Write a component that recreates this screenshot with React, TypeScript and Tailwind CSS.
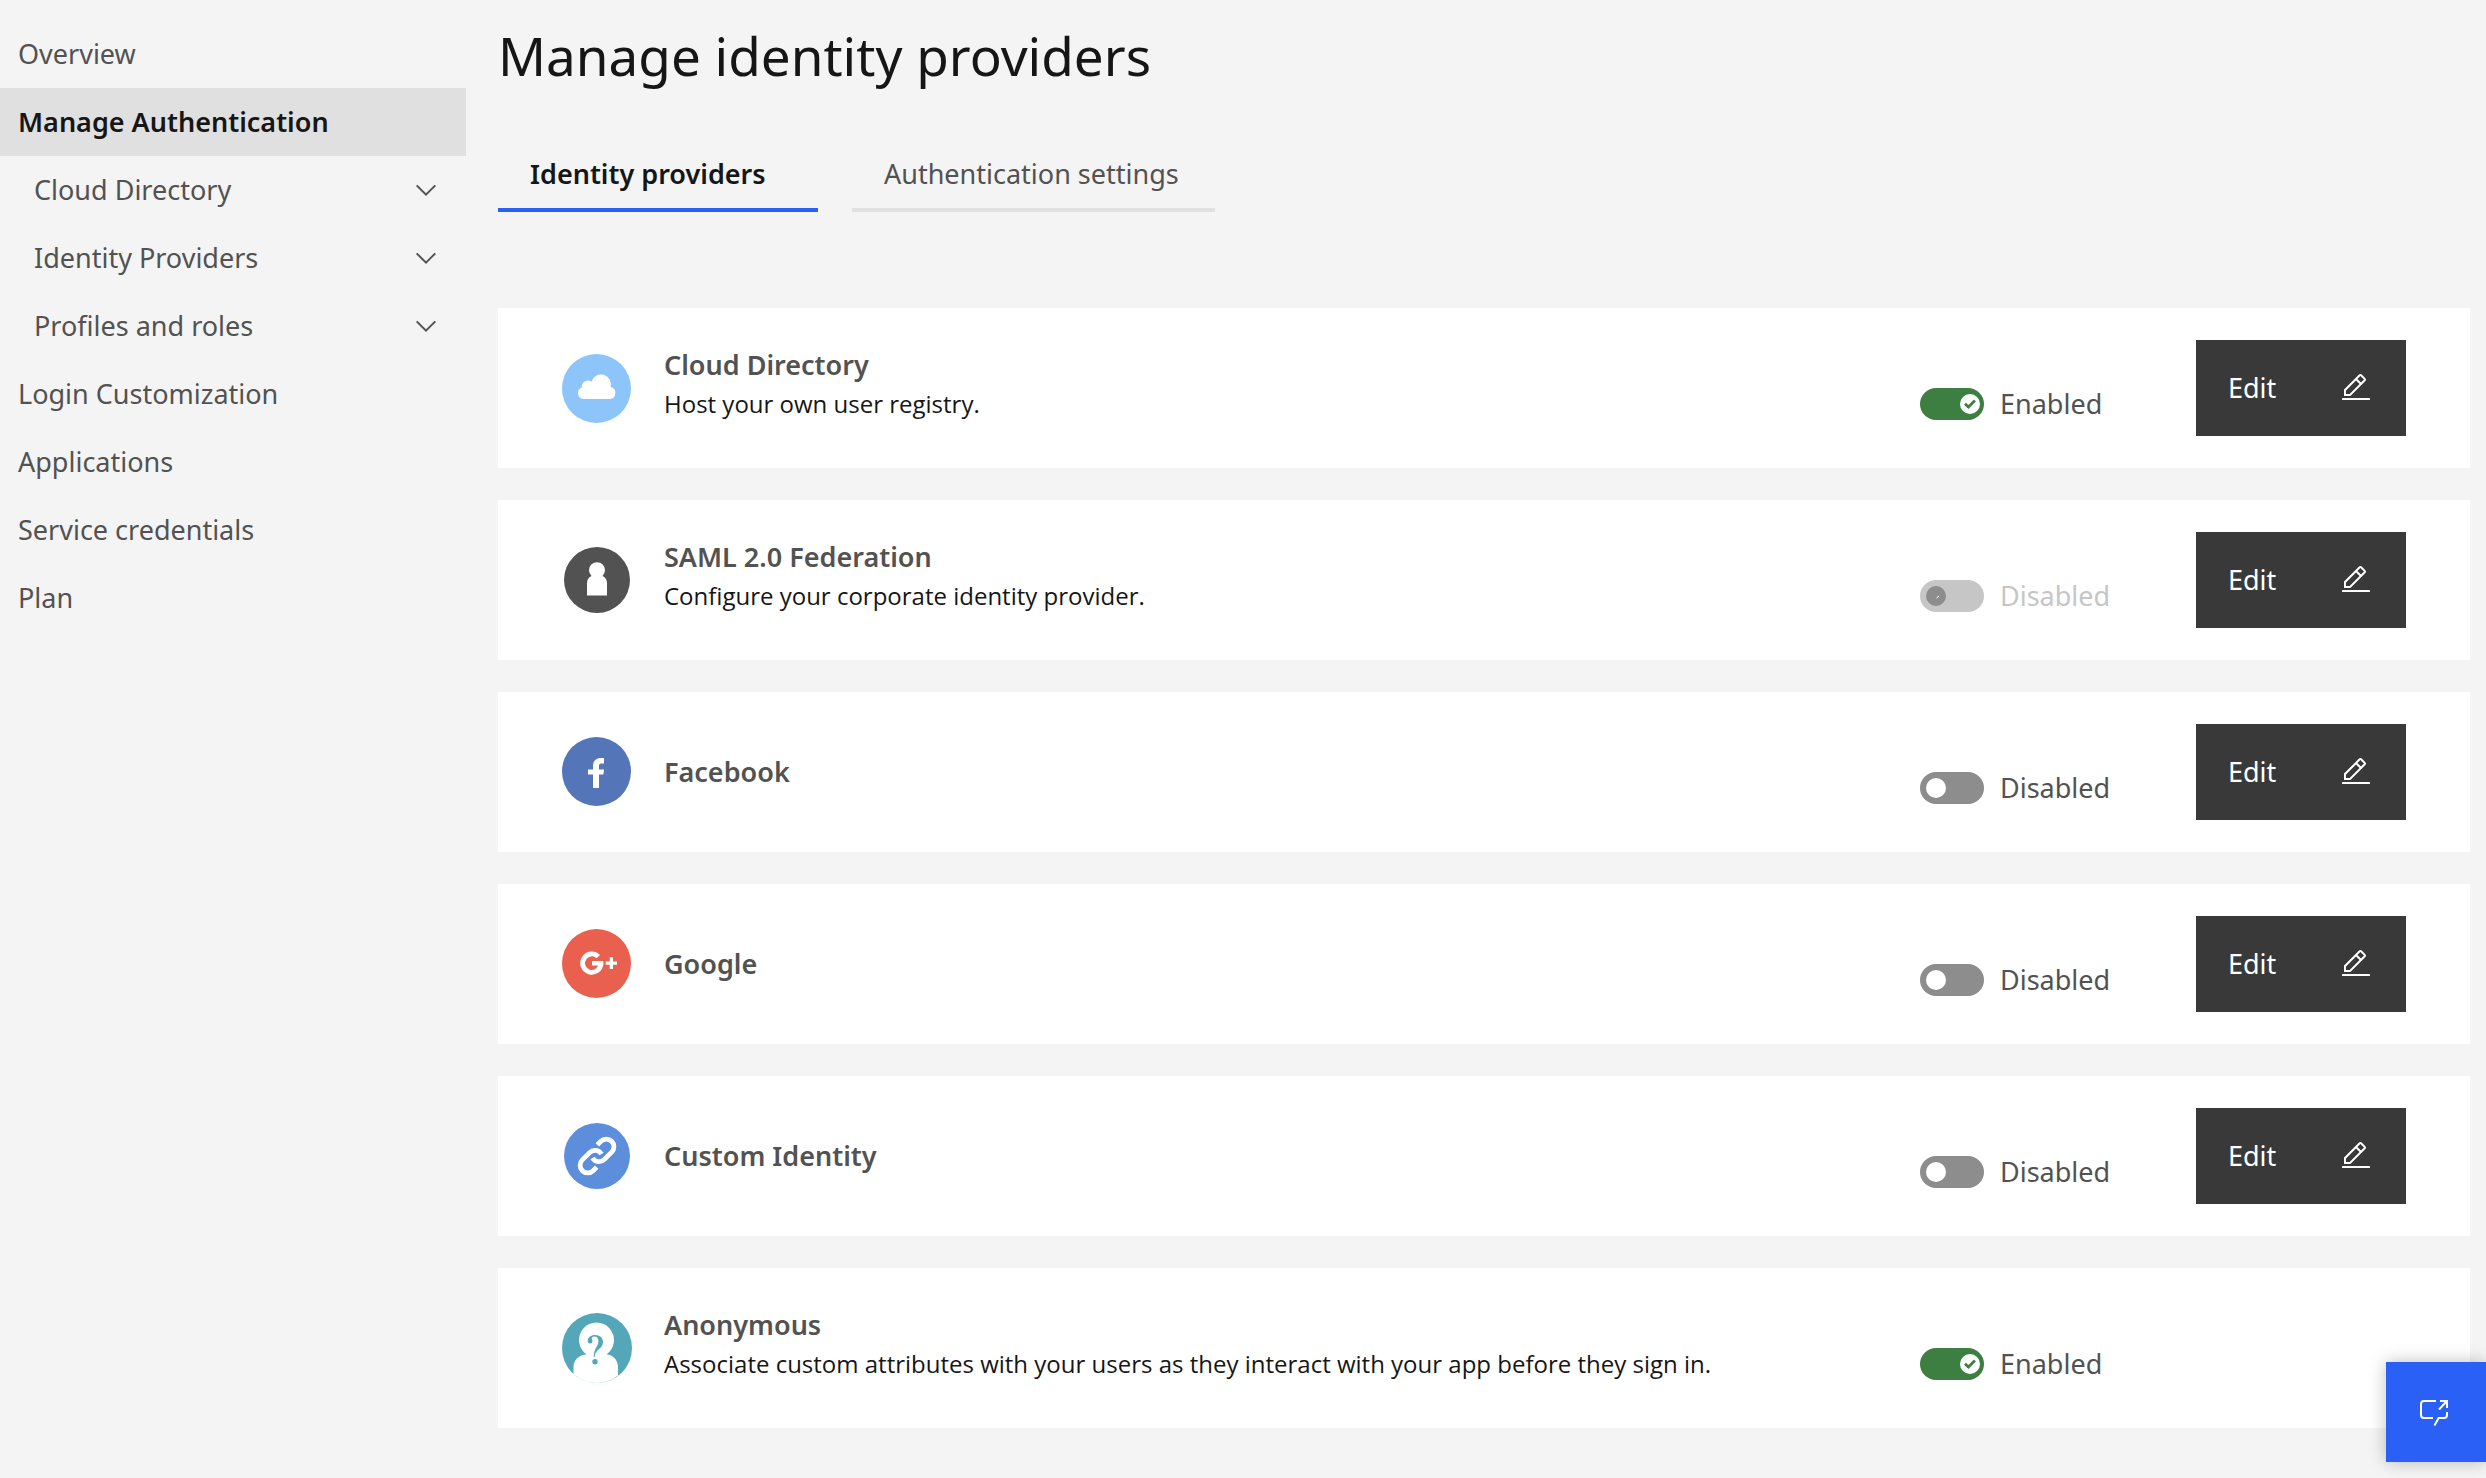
import type { ReactNode } from 'react';

const navItems = [
  { label: 'Overview' },
  { label: 'Manage Authentication', active: true },
  { label: 'Cloud Directory', nested: true },
  { label: 'Identity Providers', nested: true },
  { label: 'Profiles and roles', nested: true },
  { label: 'Login Customization' },
  { label: 'Applications' },
  { label: 'Service credentials' },
  { label: 'Plan' },
];

const ChevronDown = () => (
  <svg viewBox="0 0 32 32" className="size-8" fill="none" stroke="#525252" strokeWidth="2" aria-hidden="true">
    <path d="M6.7 11.4 16 20.7l9.3-9.3" />
  </svg>
);

const EditIcon = () => (
  <svg viewBox="0 0 32 32" className="size-8" fill="currentColor" aria-hidden="true">
    <path d="M2 26h28v2H2zM25.4 9c.8-.8.8-2 0-2.8l-3.6-3.6c-.8-.8-2-.8-2.8 0l-15 15V24h6.4l15-15zm-5-5L24 7.6l-3 3L17.4 7l3-3zM6 22v-3.6l10-10 3.6 3.6-10 10H6z" />
  </svg>
);

const ChatLaunchIcon = () => (
  <svg viewBox="0 0 32 32" className="size-8" fill="none" stroke="currentColor" strokeWidth="2" aria-hidden="true">
    <path d="M18 5H6a3 3 0 0 0-3 3v11a3 3 0 0 0 3 3h9" />
    <path d="M16.500 29.500 20.600 22H26a3 3 0 0 0 3-3v-3" />
    <path d="M22 5h7v7M29 5l-8 8.500" />
  </svg>
);

const CloudLogo = () => (
  <svg viewBox="0 0 70 70" className="size-[70px]" aria-hidden="true">
    <circle cx="34.500" cy="35.500" r="34.500" fill="#8dc5fb" />
    <path
      fill="#fff"
      d="M21 46a6 6 0 0 1-1.200-11.500A6.200 6.200 0 0 1 29.500 28.800 9.700 9.700 0 0 1 48.600 34 6.100 6.100 0 0 1 48 46z"
    />
  </svg>
);

const SamlLogo = () => (
  <svg viewBox="0 0 70 70" className="size-[70px]" aria-hidden="true">
    <circle cx="35" cy="35" r="33" fill="#525252" />
    <path fill="#fff" d="M25 50.500V38.500a8 8 0 0 1 4.500-7.500 8 8 0 1 1 11 0A8 8 0 0 1 45 38.500V50.500z" />
  </svg>
);

const FacebookLogo = () => (
  <svg viewBox="0 0 70 70" className="size-[70px]" aria-hidden="true">
    <circle cx="34.500" cy="34.500" r="34.500" fill="#5475b8" />
    <path fill="#fff" d="M31 51V37.500h-5v-5h5v-3.500c0-5.500 3.500-8 8.500-8h2.500v5.500h-2.500c-1.800 0-2.500.8-2.500 2.500v3.500h5l-.6 5H37V51z" />
  </svg>
);

const GoogleLogo = () => (
  <svg viewBox="0 0 70 70" className="size-[70px]" aria-hidden="true">
    <circle cx="34.500" cy="34.500" r="34.500" fill="#e9604f" />
    <path fill="none" stroke="#fff" strokeWidth="4.800" d="M36.300 27.600A9.200 9.200 0 1 0 39 34.600" />
    <path fill="#fff" d="M30 32h11.200l.2 2.600-.4 2H30zM47.700 28.300h3.300v4.200h4v3.300h-4V40h-3.300v-4.200h-4v-3.300h4z" />
  </svg>
);

const LinkLogo = () => (
  <svg viewBox="0 0 70 70" className="size-[70px]" aria-hidden="true">
    <circle cx="35" cy="35" r="33" fill="#5d8edc" />
    <g fill="none" stroke="#fff" strokeWidth="4.800">
      <path d="M35.300 23.900 38.900 20.300A7.600 7.600 0 0 1 49.700 31.100L42.400 38.400A7.600 7.600 0 0 1 30.500 37" />
      <path d="M34.700 46.100 31.100 49.700A7.600 7.600 0 0 1 20.300 38.900L27.600 31.600A7.600 7.600 0 0 1 39.500 33" />
    </g>
  </svg>
);

const AnonymousLogo = () => (
  <svg viewBox="0 0 70 70" className="size-[70px]" aria-hidden="true">
    <circle cx="35" cy="35" r="35" fill="#53a7b9" />
    <path
      fill="#fff"
      d="M11.500 61V54c0-7 5.500-12.300 13-12.600A17.500 17.500 0 1 1 44.500 41.400c6.500.3 11.500 5.600 11.500 12.600v8.500A35 35 0 0 1 35 70 35 35 0 0 1 11.500 61z"
    />
    <path
      fill="#53a7b9"
      d="M31.800 44c0-9 4.600-10.500 4.600-15.500 0-3-1.400-4.900-4-4.900-1.600 0-2.700.8-2.700 2 0 .9.800 1.400.8 2.600a2.200 2.200 0 0 1-2.300 2.200c-1.500 0-2.500-1-2.500-2.600 0-3.200 3-5.800 7.400-5.800 5 0 7.900 2.900 7.900 7.300 0 6.700-8.300 7.300-8.300 14.700z"
    />
    <circle cx="33" cy="48.800" r="2.700" fill="#53a7b9" />
  </svg>
);

type Provider = {
  name: string;
  description?: string;
  icon: ReactNode;
  enabled?: boolean;
  locked?: boolean;
  editable?: boolean;
};

const providers: Provider[] = [
  { name: 'Cloud Directory', description: 'Host your own user registry.', icon: <CloudLogo />, enabled: true, editable: true },
  { name: 'SAML 2.0 Federation', description: 'Configure your corporate identity provider.', icon: <SamlLogo />, locked: true, editable: true },
  { name: 'Facebook', icon: <FacebookLogo />, editable: true },
  { name: 'Google', icon: <GoogleLogo />, editable: true },
  { name: 'Custom Identity', icon: <LinkLogo />, editable: true },
  {
    name: 'Anonymous',
    description: 'Associate custom attributes with your users as they interact with your app before they sign in.',
    icon: <AnonymousLogo />,
    enabled: true,
  },
];

function Toggle({ name, enabled, locked }: { name: string; enabled?: boolean; locked?: boolean }) {
  return (
    <label className={`mt-8 flex w-[276px] shrink-0 items-center gap-4 ${locked ? 'text-[#c6c6c6]' : 'text-[#525252]'}`}>
      <input
        type="checkbox"
        role="switch"
        aria-label={name}
        defaultChecked={enabled}
        disabled={locked}
        className="peer sr-only"
      />
      <span className="flex h-8 w-16 items-center rounded-full bg-[#8d8d8d] pr-1 pl-1.5 peer-checked:justify-end peer-checked:bg-[#3d7f40] peer-disabled:bg-[#c6c6c6]">
        <span className={`flex size-5 items-center justify-center rounded-full ${locked ? 'bg-[#8d8d8d]' : 'bg-white'}`}>
          {enabled && (
            <svg viewBox="0 0 12 10" className="h-2.5 w-3" fill="none" stroke="#3d7f40" strokeWidth="2.800" aria-hidden="true">
              <path d="m1 4.800 3.400 3.200L11 1.400" />
            </svg>
          )}
          {locked && (
            <svg viewBox="0 0 4 4" className="mt-0.5 ml-1 size-1" stroke="#fff" aria-hidden="true">
              <path d="M.5 3 3 1" />
            </svg>
          )}
        </span>
      </span>
      <span>{enabled ? 'Enabled' : 'Disabled'}</span>
    </label>
  );
}

function ProviderCard({ provider }: { provider: Provider }) {
  return (
    <li className="flex h-40 items-center bg-white px-16">
      {provider.icon}
      <div className="min-w-0 flex-1 px-8">
        <h2 className="font-semibold text-[#525252]">{provider.name}</h2>
        {provider.description && (
          <p className="mb-2 font-['Open_Sans',sans-serif] text-2xl leading-[38px] text-[#161616]">{provider.description}</p>
        )}
      </div>
      <Toggle name={provider.name} enabled={provider.enabled} locked={provider.locked} />
      <div className="w-[210px] shrink-0">
        {provider.editable && (
          <button type="button" className="flex h-24 w-full items-center justify-between bg-[#393939] pr-[34px] pl-8 text-white">
            Edit
            <EditIcon />
          </button>
        )}
      </div>
    </li>
  );
}

export default function App() {
  return (
    <div className="flex min-h-screen bg-[#f4f4f4] font-['Noto_Sans',sans-serif] text-[27px] leading-10 text-[#525252]">
      <nav className="w-[466px] shrink-0 pt-5" aria-label="Service">
        <ul>
          {navItems.map((item) => (
            <li key={item.label}>
              <a
                href="#"
                aria-current={item.active ? 'page' : undefined}
                className={`flex h-[68px] items-center justify-between pr-6 ${item.nested ? 'pl-[34px]' : 'pl-[18px]'} ${
                  item.active ? 'bg-[#e0e0e0] font-semibold text-[#161616]' : ''
                }`}
              >
                {item.label}
                {item.nested && <ChevronDown />}
              </a>
            </li>
          ))}
        </ul>
      </nav>

      <main className="min-w-0 flex-1 pt-5 pr-4 pb-12 pl-8">
        <h1 className="text-[53px] leading-[72px] text-[#161616]">Manage identity providers</h1>
        <div role="tablist" className="mt-12 flex gap-[34px]">
          <button
            type="button"
            role="tab"
            aria-selected="true"
            className="h-[72px] w-[320px] border-b-4 border-[#2b60f6] px-8 text-left font-semibold text-[#161616]"
          >
            Identity providers
          </button>
          <button type="button" role="tab" aria-selected="false" className="h-[72px] w-[363px] border-b-4 border-[#e0e0e0] px-8 text-left">
            Authentication settings
          </button>
        </div>
        <ul className="mt-24 flex flex-col gap-8">
          {providers.map((provider) => (
            <ProviderCard key={provider.name} provider={provider} />
          ))}
        </ul>
      </main>

      <button
        type="button"
        aria-label="Open chat"
        className="fixed right-0 bottom-4 flex size-[100px] items-center justify-center bg-[#2b60f6] pr-1 text-white shadow-[0_0_16px_rgba(0,0,0,0.25)]"
      >
        <ChatLaunchIcon />
      </button>
    </div>
  );
}
